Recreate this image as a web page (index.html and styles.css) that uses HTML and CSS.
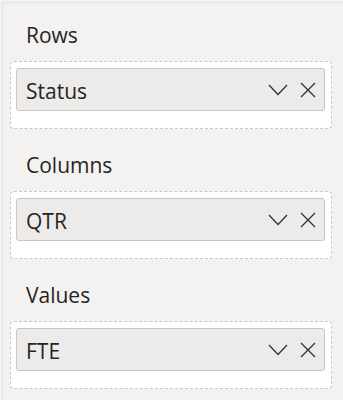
FILE: index.html
```html
<!DOCTYPE html>
<html>
<head>
  <meta charset="UTF-8">
  <title>Fields</title>
  <link rel="stylesheet" href="styles.css">
</head>
<body>

  <div class="pane">

    <div class="well">
      <div class="well-title">Rows</div>
      <div class="drop-zone">
        <div class="field-pill">
          <span class="field-name">Status</span>
          <svg class="chevron" width="20" height="12" viewBox="0 0 20 12"><path d="M1 1 L10 10.5 L19 1" fill="none" stroke="#323130" stroke-width="1.25"/></svg>
          <svg class="remove" width="16" height="16" viewBox="0 0 16 16"><path d="M1 1 L15 15 M15 1 L1 15" fill="none" stroke="#323130" stroke-width="1.25"/></svg>
        </div>
      </div>
    </div>

    <div class="well">
      <div class="well-title">Columns</div>
      <div class="drop-zone">
        <div class="field-pill">
          <span class="field-name">QTR</span>
          <svg class="chevron" width="20" height="12" viewBox="0 0 20 12"><path d="M1 1 L10 10.5 L19 1" fill="none" stroke="#323130" stroke-width="1.25"/></svg>
          <svg class="remove" width="16" height="16" viewBox="0 0 16 16"><path d="M1 1 L15 15 M15 1 L1 15" fill="none" stroke="#323130" stroke-width="1.25"/></svg>
        </div>
      </div>
    </div>

    <div class="well">
      <div class="well-title">Values</div>
      <div class="drop-zone">
        <div class="field-pill">
          <span class="field-name">FTE</span>
          <svg class="chevron" width="20" height="12" viewBox="0 0 20 12"><path d="M1 1 L10 10.5 L19 1" fill="none" stroke="#323130" stroke-width="1.25"/></svg>
          <svg class="remove" width="16" height="16" viewBox="0 0 16 16"><path d="M1 1 L15 15 M15 1 L1 15" fill="none" stroke="#323130" stroke-width="1.25"/></svg>
        </div>
      </div>
    </div>

  </div>

</body>
</html>
```

FILE: styles.css
```css
body {
  margin: 0;
  padding: 0;
  background-color: #f3f2f1;
  font-family: "Open Sans", "Noto Sans", Arial, sans-serif;
  color: #252423;
}

.pane {
  margin: 2px 0 0 2px;
  border-top: 1px solid #e4e2e0;
  border-left: 1px solid #e1dfdd;
  padding: 18px 11px 0 7px;
  height: 400px;
  box-sizing: border-box;
}

.well {
  margin-bottom: 22px;
}

.well-title {
  font-size: 21px;
  line-height: 28px;
  padding-left: 16px;
  margin-bottom: 12px;
}

.drop-zone {
  background: #ffffff;
  border: 1px dashed #c8c6c4;
  border-radius: 4px;
  padding: 6px 6px 17px 5px;
}

.field-pill {
  display: flex;
  align-items: center;
  height: 43px;
  box-sizing: border-box;
  background: #edebe9;
  border: 1px solid #c8c6c4;
  border-radius: 3px;
  padding: 0 8px 0 9px;
}

.field-name {
  flex: 1;
  font-size: 21px;
  line-height: 28px;
  padding-top: 3px;
}

.chevron {
  margin-right: 12px;
}
```
